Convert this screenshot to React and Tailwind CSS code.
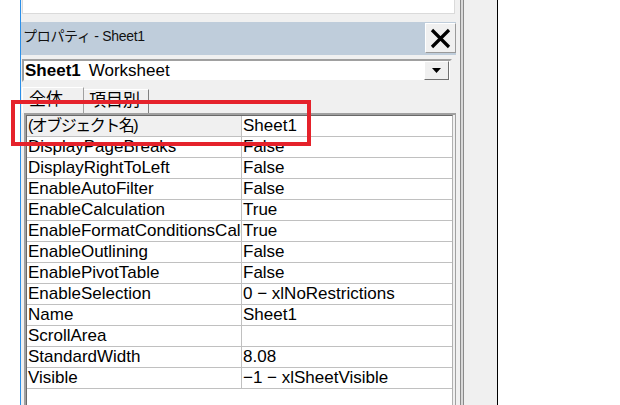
import React from "react";

const rows = [
  ["(オブジェクト名)", "Sheet1"],
  ["DisplayPageBreaks", "False"],
  ["DisplayRightToLeft", "False"],
  ["EnableAutoFilter", "False"],
  ["EnableCalculation", "True"],
  ["EnableFormatConditionsCalculation", "True"],
  ["EnableOutlining", "False"],
  ["EnablePivotTable", "False"],
  ["EnableSelection", "0 − xlNoRestrictions"],
  ["Name", "Sheet1"],
  ["ScrollArea", ""],
  ["StandardWidth", "8.08"],
  ["Visible", "−1 − xlSheetVisible"],
];

const font = "font-['Liberation_Sans','Noto_Sans_CJK_JP',sans-serif]";

const App = () => {
  return (
    <div className={`relative flex w-[620px] h-[405px] overflow-hidden bg-white text-black ${font}`}>
      {/* left white strip */}
      <div className="w-[20px] shrink-0 bg-white" />

      {/* property pane */}
      <div className="flex w-[478px] shrink-0 border-l border-r border-l-[#2b8fe8] border-r-black bg-[#f0f0f0]">
        <div className="flex w-[435px] shrink-0 flex-col">
          {/* top box (cut off) */}
          <div className="ml-px h-[14px] w-[433px] border-x border-b border-[#dadada] bg-white" />

          {/* title bar */}
          <div className="mt-[8px] flex h-[33px] items-start justify-between bg-[#bfcddb]">
            <span className="pl-[2px] pt-[4px] text-[14px] leading-[20px] tracking-[-0.3px] text-[#111]">
              プロパティ - Sheet1
            </span>
            <button className="mt-px flex h-[30px] w-[31px] items-center justify-center border border-[#9a9a9a] border-t-white border-l-white bg-[#f0f0f0]">
              <svg width="21" height="21" viewBox="0 0 21 21">
                <path d="M2 2 L19 19 M19 2 L2 19" stroke="#000" strokeWidth="3.2" />
              </svg>
            </button>
          </div>

          {/* object combobox */}
          <div className="ml-px mt-[4px] flex h-[23px] w-[430px] items-center border-2 border-[#a0a0a0] border-r-[#f0f0f0] border-b-[#f0f0f0] bg-white">
            <div className="flex-1 pl-[1px] text-[17px] leading-none">
              <span className="font-bold">Sheet1</span>
              <span className="ml-[8px]">Worksheet</span>
            </div>
            <div className="mr-[1px] flex h-[19px] w-[25px] items-center justify-center border border-[#707070] border-t-white border-l-white bg-[#f0f0f0]">
              <svg width="9" height="5" viewBox="0 0 9 5">
                <path d="M0 0 H9 L4.5 5 Z" fill="#000" />
              </svg>
            </div>
          </div>

          {/* tabs */}
          <div className="ml-px mt-[5px] flex h-[26px] items-end">
            <div className="h-[26px] w-[62px] border-l border-t border-r border-white border-r-[#a0a0a0] pl-[6px] pt-[2px] text-[17px] leading-[20px]">
              全体
            </div>
            <div className="h-[24px] w-[65px] border-t border-r border-white border-r-[#808080] pl-[5px] pt-[1px] text-[17px] leading-[20px]">
              項目別
            </div>
          </div>

          {/* property grid */}
          <div className="ml-[3px] flex-1 border-l-2 border-t-2 border-r border-[#a0a0a0] pr-[2px]">
            <div className="h-full border-l border-t border-r border-[#696969] border-r-[#b0b0b0] bg-white">
              {rows.map(([name, value], i) => (
                <div key={name} className="flex h-[21px] border-b border-[#c0c0c0]">
                  <div
                    className={`w-[215px] shrink-0 overflow-hidden text-clip whitespace-nowrap border-r border-[#c0c0c0] pl-[1px] leading-[20px] ${
                      i === 0 ? "bg-[#f0f0f0] text-[16px] tracking-[-1.5px]" : "text-[17px]"
                    }`}
                  >
                    {name}
                  </div>
                  <div className="flex-1 overflow-hidden whitespace-nowrap pl-[1px] text-[17px] leading-[20px]">
                    {value}
                  </div>
                </div>
              ))}
            </div>
          </div>
        </div>

        {/* splitter */}
        <div className="ml-[4px] w-[4px] shrink-0 border-x border-[#8a8a8a] bg-[#d8d8d8]" />
        <div className="flex-1" />
      </div>

      <div className="flex-1 bg-white" />

      {/* red annotation */}
      <div className="absolute left-[11px] top-[100px] h-[46px] w-[300px] border-4 border-[#e5222b]" />
    </div>
  );
};

export default App;
